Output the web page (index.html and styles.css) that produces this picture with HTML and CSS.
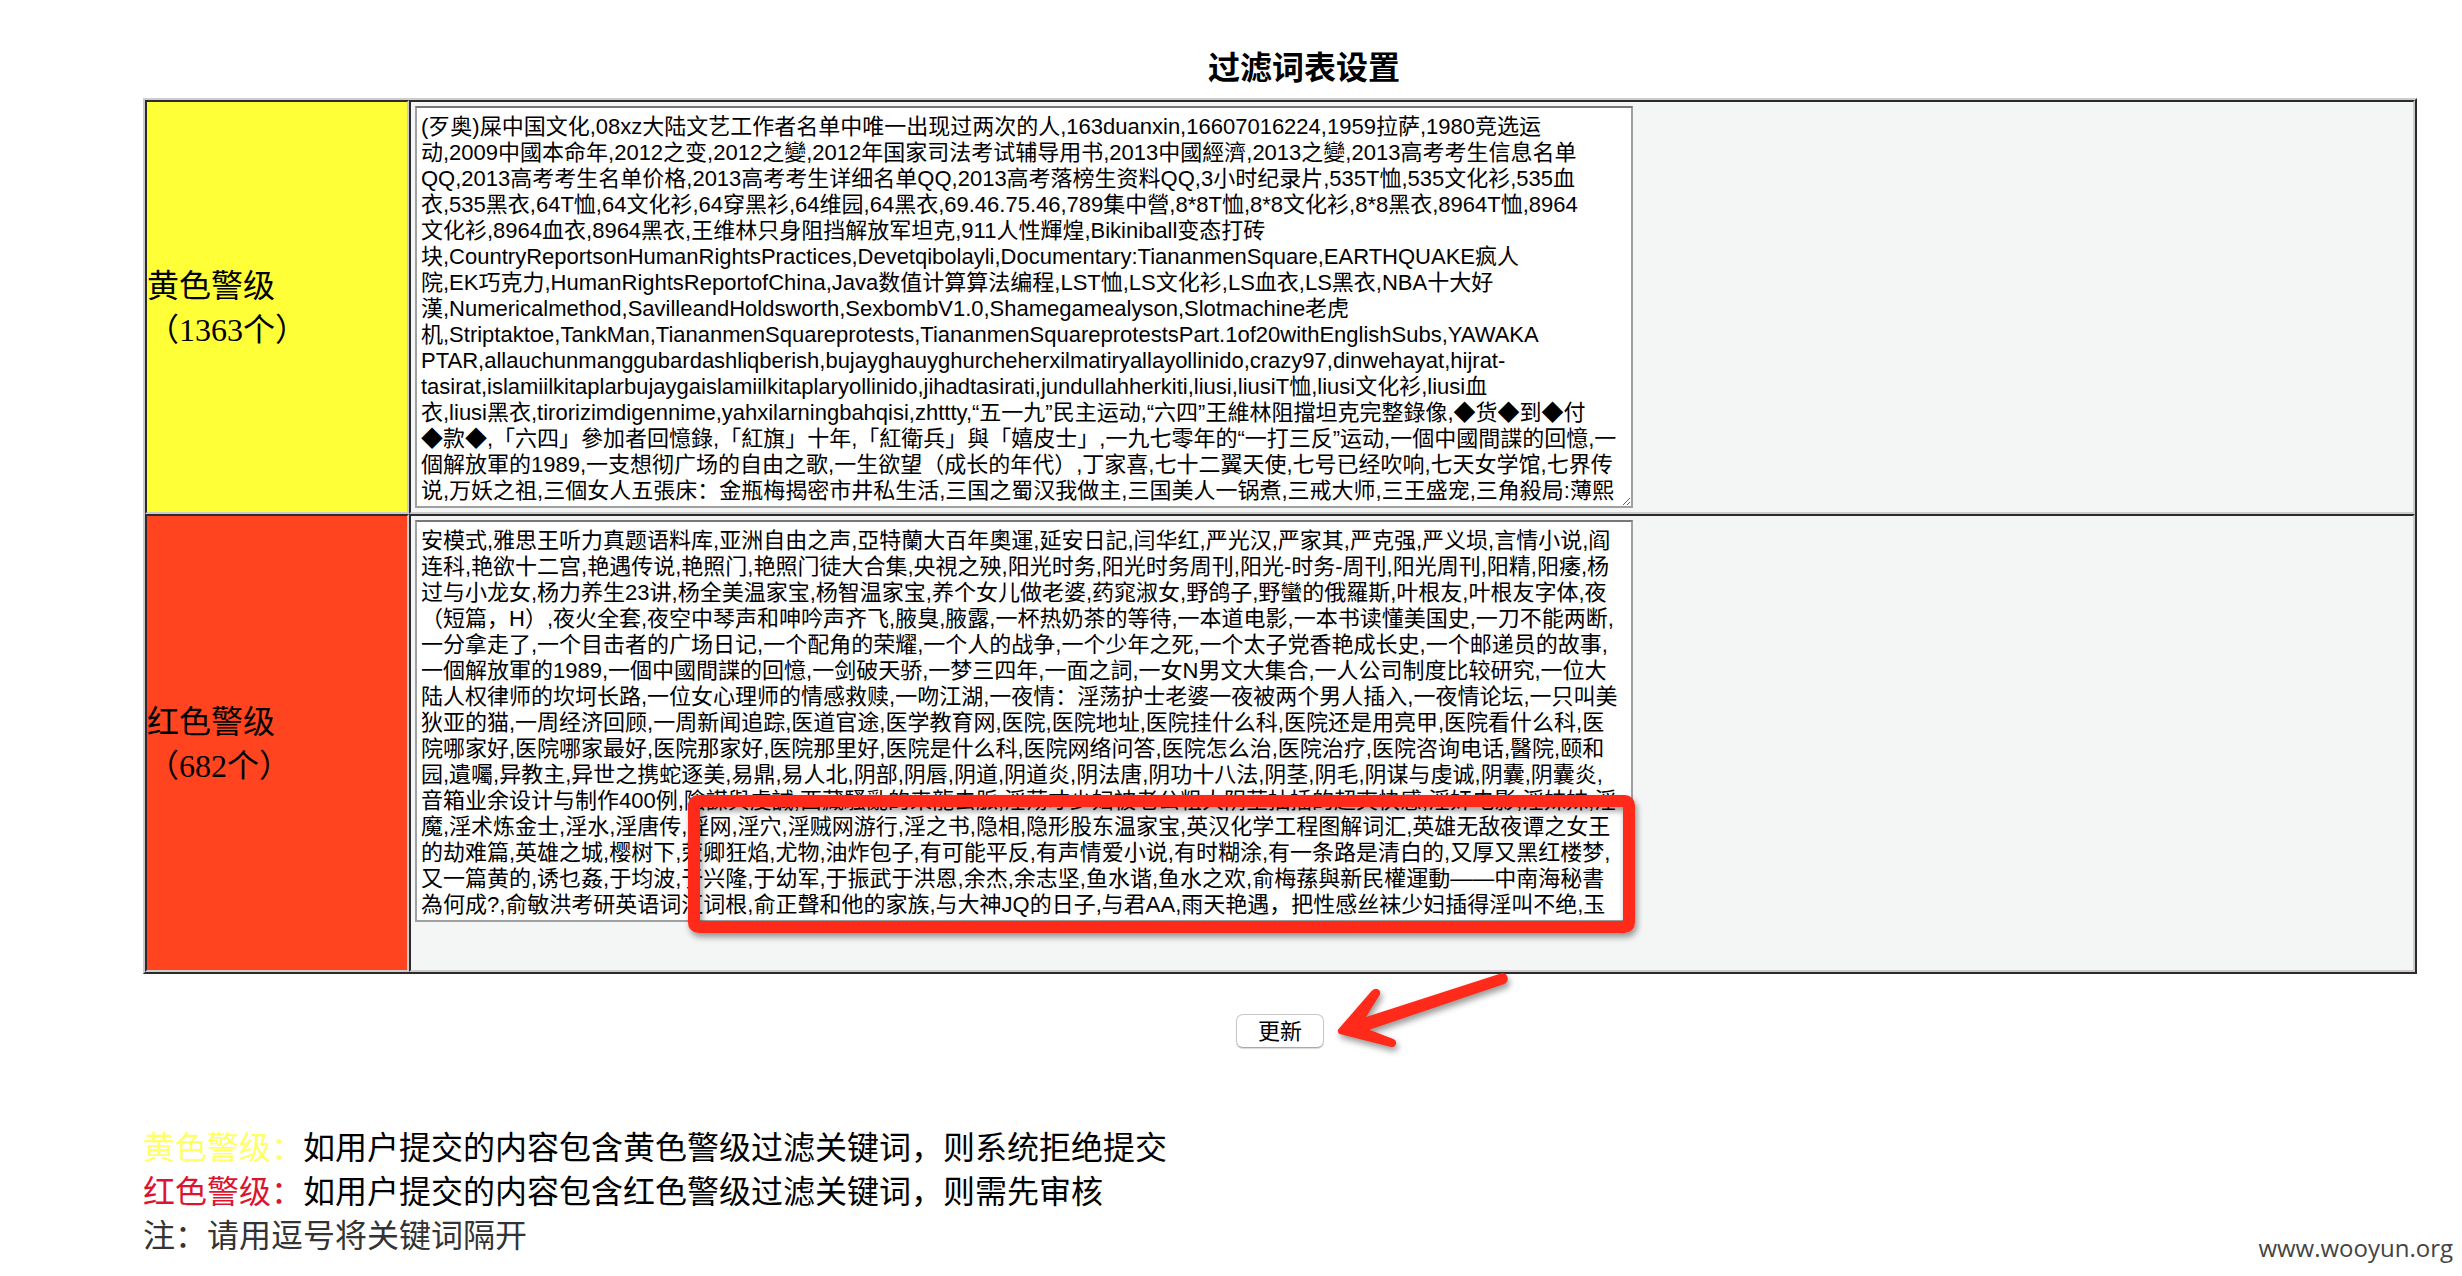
FILE: index.html
```html
<!DOCTYPE html>
<html lang="zh-CN">
  <head>
    <meta charset="UTF-8" />
    <meta name="viewport" content="width=device-width, initial-scale=1.0" />
    <title>过滤词表设置</title>
    <link rel="stylesheet" href="styles.css">
  </head>
  <body>
    <form class="filter-form">
      <h1 class="title">过滤词表设置</h1>
      <table class="filter-table">
        <tr>
          <th class="level level-yellow" scope="row">
            <label for="yellowWords">黄色警级<br>（1363个）</label>
          </th>
          <td class="words">
            <textarea id="yellowWords" spellcheck="false">
(歹奥)屎中国文化,08xz大陆文艺工作者名单中唯一出现过两次的人,163duanxin,16607016224,1959拉萨,1980竞选运
动,2009中國本命年,2012之变,2012之變,2012年国家司法考试辅导用书,2013中國經濟,2013之變,2013高考考生信息名单
QQ,2013高考考生名单价格,2013高考考生详细名单QQ,2013高考落榜生资料QQ,3小时纪录片,535T恤,535文化衫,535血
衣,535黑衣,64T恤,64文化衫,64穿黑衫,64维园,64黑衣,69.46.75.46,789集中營,8*8T恤,8*8文化衫,8*8黑衣,8964T恤,8964
文化衫,8964血衣,8964黑衣,王维林只身阻挡解放军坦克,911人性輝煌,Bikiniball变态打砖
块,CountryReportsonHumanRightsPractices,Devetqibolayli,Documentary:TiananmenSquare,EARTHQUAKE疯人
院,EK巧克力,HumanRightsReportofChina,Java数值计算算法编程,LST恤,LS文化衫,LS血衣,LS黑衣,NBA十大好
漢,Numericalmethod,SavilleandHoldsworth,SexbombV1.0,Shamegamealyson,Slotmachine老虎
机,Striptaktoe,TankMan,TiananmenSquareprotests,TiananmenSquareprotestsPart.1of20withEnglishSubs,YAWAKA
PTAR,allauchunmanggubardashliqberish,bujayghauyghurcheherxilmatiryallayollinido,crazy97,dinwehayat,hijrat-
tasirat,islamiilkitaplarbujaygaislamiilkitaplaryollinido,jihadtasirati,jundullahherkiti,liusi,liusiT恤,liusi文化衫,liusi血
衣,liusi黑衣,tirorizimdigennime,yahxilarningbahqisi,zhttty,“五一九”民主运动,“六四”王維林阻擋坦克完整錄像,◆货◆到◆付
◆款◆,「六四」參加者回憶錄,「紅旗」十年,「紅衛兵」與「嬉皮士」,一九七零年的“一打三反”运动,一個中國間諜的回憶,一
個解放軍的1989,一支想彻广场的自由之歌,一生欲望（成长的年代）,丁家喜,七十二翼天使,七号已经吹响,七天女学馆,七界传
说,万妖之祖,三個女人五張床：金瓶梅揭密市井私生活,三国之蜀汉我做主,三国美人一锅煮,三戒大师,三王盛宠,三角殺局:薄熙</textarea>
          </td>
        </tr>
        <tr>
          <th class="level level-red" scope="row">
            <label for="redWords">红色警级<br>（682个）</label>
          </th>
          <td class="words words-last">
            <div class="marked">
              <textarea id="redWords" spellcheck="false">
安模式,雅思王听力真题语料库,亚洲自由之声,亞特蘭大百年奧運,延安日記,闫华红,严光汉,严家其,严克强,严义埙,言情小说,阎
连科,艳欲十二宫,艳遇传说,艳照门,艳照门徒大合集,央視之殃,阳光时务,阳光时务周刊,阳光-时务-周刊,阳光周刊,阳精,阳痿,杨
过与小龙女,杨力养生23讲,杨全美温家宝,杨智温家宝,养个女儿做老婆,药窕淑女,野鸽子,野蠻的俄羅斯,叶根友,叶根友字体,夜
（短篇，H）,夜火全套,夜空中琴声和呻吟声齐飞,腋臭,腋露,一杯热奶茶的等待,一本道电影,一本书读懂美国史,一刀不能两断,
一分拿走了,一个目击者的广场日记,一个配角的荣耀,一个人的战争,一个少年之死,一个太子党香艳成长史,一个邮递员的故事,
一個解放軍的1989,一個中國間諜的回憶,一剑破天骄,一梦三四年,一面之詞,一女N男文大集合,一人公司制度比较研究,一位大
陆人权律师的坎坷长路,一位女心理师的情感救赎,一吻江湖,一夜情：淫荡护士老婆一夜被两个男人插入,一夜情论坛,一只叫美
狄亚的猫,一周经济回顾,一周新闻追踪,医道官途,医学教育网,医院,医院地址,医院挂什么科,医院还是用亮甲,医院看什么科,医
院哪家好,医院哪家最好,医院那家好,医院那里好,医院是什么科,医院网络问答,医院怎么治,医院治疗,医院咨询电话,醫院,颐和
园,遺囑,异教主,异世之携蛇逐美,易鼎,易人北,阴部,阴唇,阴道,阴道炎,阴法唐,阴功十八法,阴茎,阴毛,阴谋与虔诚,阴囊,阴囊炎,
音箱业余设计与制作400例,陰謀與虔誠,西藏騷亂的来龍去脈,淫荡才少妇被老公粗大阴茎抽插的超爽快感,淫奸电影,淫妹妹,淫
魔,淫术炼金士,淫水,淫唐传,淫网,淫穴,淫贼网游行,淫之书,隐相,隐形股东温家宝,英汉化学工程图解词汇,英雄无敌夜谭之女王
的劫难篇,英雄之城,樱树下,荥卿狂焰,尤物,油炸包子,有可能平反,有声情爱小说,有时糊涂,有一条路是清白的,又厚又黑红楼梦,
又一篇黄的,诱乜姦,于均波,于兴隆,于幼军,于振武于洪恩,余杰,余志坚,鱼水谐,鱼水之欢,俞梅蓀與新民權運動——中南海秘書
為何成?,俞敏洪考研英语词汇词根,俞正聲和他的家族,与大神JQ的日子,与君AA,雨天艳遇，把性感丝袜少妇插得淫叫不绝,玉</textarea>
              <span class="mark-box"></span>
            </div>
          </td>
        </tr>
      </table>

      <div class="actions">
        <div class="action">
          <button class="update-button" type="button">更新</button>
          <svg class="arrow" viewBox="465 60 540 246" aria-hidden="true">
            <path d="M475 235 L574 121 Q583 110 594 115 Q604 121 599 132 L558 198 L960 68 Q976 64 982 77 Q987 92 973 99 L568 236 L640 264 Q651 269 648 279 Q644 290 633 288 L479 249 Q470 244 475 235 Z" fill="#ff2a1a" />
          </svg>
        </div>
      </div>
    </form>

    <div class="notes">
      <p><span class="note-yellow">黄色警级：</span>如用户提交的内容包含黄色警级过滤关键词，则系统拒绝提交</p>
      <p><span class="note-red">红色警级：</span>如用户提交的内容包含红色警级过滤关键词，则需先审核</p>
      <p class="note-hint">注：请用逗号将关键词隔开</p>
    </div>

    <footer class="site">www.wooyun.org</footer>
  </body>
</html>
```
FILE: styles.css
```css
body {
  margin: 0;
  padding: 46px 45px 0 143px;
  background-color: #fff;
  color: #000;
  font-family: "Liberation Serif", "Noto Sans CJK SC", serif;
  font-size: 32px;
  line-height: 44px;
  text-spacing-trim: space-all;
}

.title {
  margin: 0 0 8px;
  padding-left: 48px;
  font-size: 32px;
  font-weight: bold;
  text-align: center;
}

.filter-table {
  width: 100%;
  border: 2px solid;
  border-color: #ccc #2d2a2e #2d2a2e #ccc;
  border-spacing: 0;
  background-color: #f4f6f5;
}
.filter-table th,
.filter-table td {
  border: 2px solid;
  border-color: #2d2a2e #ccc #ccc #2d2a2e;
}

.level {
  width: 260px;
  padding: 2px 0 0;
  font-weight: normal;
  text-align: left;
}
.level label {
  display: block;
}
.level-yellow {
  background-color: #ffff38;
}
.level-red {
  background-color: #ff441f;
}

.words {
  padding: 4px;
}
.words-last {
  padding-bottom: 48px;
}
.words textarea {
  display: block;
  width: 1218px;
  max-width: 100%;
  height: 402px;
  padding: 6px 4px 4px;
  box-sizing: border-box;
  border: 2px solid #a0a0a0;
  border-top-color: #777;
  background-color: #fff;
  color: #000;
  font-family: "Liberation Sans", "Noto Sans CJK SC", sans-serif;
  font-size: 22px;
  line-height: 26px;
  white-space: pre;
  overflow: hidden;
  text-spacing-trim: space-all;
}

/* red frame over the end of the list */
.marked {
  position: relative;
  width: 1218px;
  max-width: 100%;
}
.mark-box {
  position: absolute;
  top: 275px;
  right: -2px;
  bottom: -11px;
  left: 273px;
  border: 12px solid #ff2a1a;
  border-radius: 10px;
  box-shadow: 2px 4px 6px rgba(0, 0, 0, 0.4), inset 2px 4px 6px rgba(0, 0, 0, 0.4);
  pointer-events: none;
}

.actions {
  display: flex;
  justify-content: center;
  padding: 40px 0 78px;
}
.action {
  position: relative;
}
.update-button {
  display: block;
  width: 88px;
  height: 34px;
  padding: 0;
  border: 1px solid #c8c8c8;
  border-bottom-color: #aaa;
  border-radius: 7px;
  background-color: #fff;
  box-shadow: 0 1px 1px rgba(0, 0, 0, 0.15);
  color: #000;
  font-family: "Liberation Sans", "Noto Sans CJK SC", sans-serif;
  font-size: 22px;
  line-height: 34px;
}
.arrow {
  position: absolute;
  top: -43px;
  left: 99px;
  width: 180px;
  height: 82px;
  overflow: visible;
  filter: drop-shadow(2px 4px 3px rgba(0, 0, 0, 0.4));
}

.notes p {
  margin: 0;
}
.note-yellow {
  color: #ffff66;
}
.note-red {
  color: #dc1430;
}
.note-hint {
  color: #333;
}

.site {
  position: absolute;
  right: 9px;
  bottom: 8px;
  color: #444;
  font-family: "Open Sans", "Noto Sans", sans-serif;
  font-size: 24px;
  line-height: 40px;
}
```
